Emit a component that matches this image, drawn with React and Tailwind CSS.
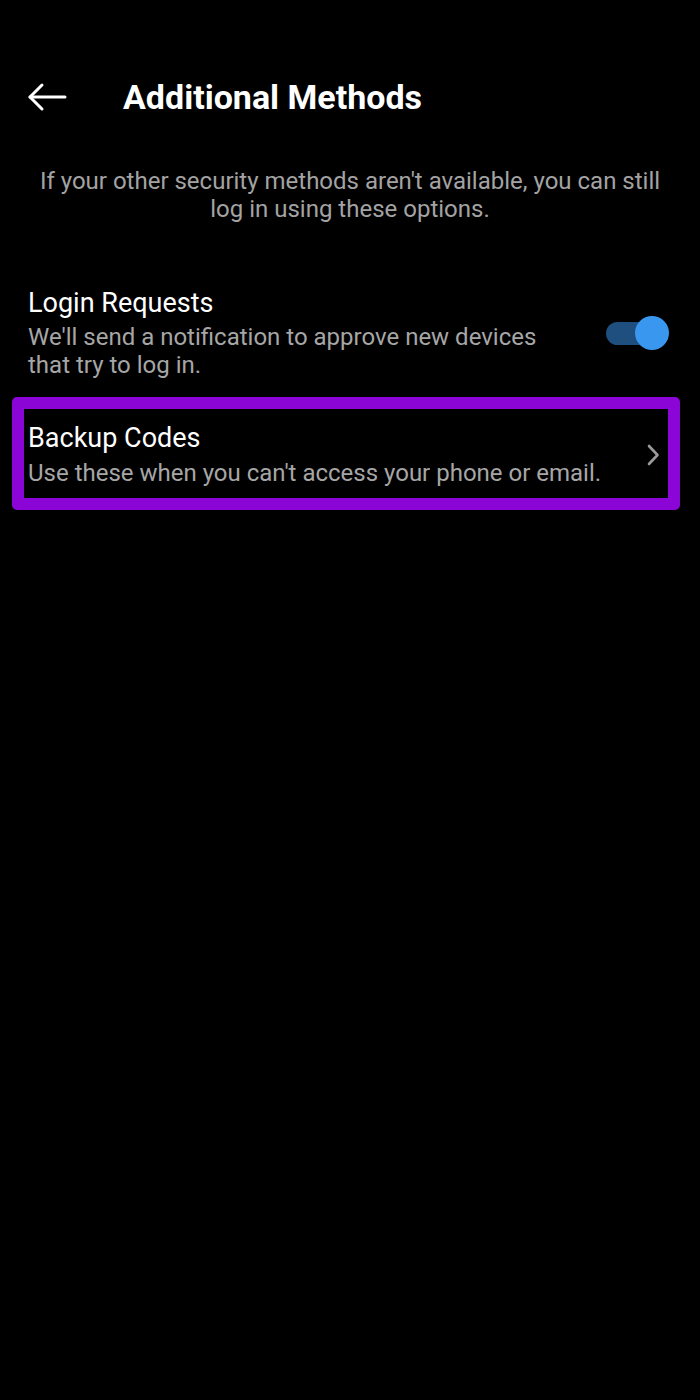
function BackArrow() {
  return (
    <svg width="40" height="30" viewBox="0 0 40 30" fill="none" stroke="white" strokeWidth="3" strokeLinecap="round" strokeLinejoin="round">
      <path d="M38 15H3" />
      <path d="M15 3L3 15l12 12" />
    </svg>
  )
}

function Chevron() {
  return (
    <svg width="14" height="22" viewBox="0 0 14 22" fill="none" stroke="#9a9a9a" strokeWidth="2.6" strokeLinecap="round" strokeLinejoin="round">
      <path d="M3 2l8.5 9L3 20" />
    </svg>
  )
}

function Toggle() {
  return (
    <div className="relative h-[34px] w-[63px] shrink-0">
      <div className="absolute left-0 top-[6px] h-[23px] w-[56px] rounded-full bg-[#1f4f7e]" />
      <div className="absolute right-0 top-0 h-[34px] w-[34px] rounded-full bg-[#3a97ef]" />
    </div>
  )
}

export default function App() {
  return (
    <div className="min-h-[1400px] w-[700px] bg-black font-['Roboto',sans-serif] text-white">
      <div className="box-content flex h-[60px] items-center pt-[67px]">
        <div className="ml-[27px] flex w-[96px] items-center">
          <BackArrow />
        </div>
        <h1 className="text-[34px] font-bold leading-none">Additional Methods</h1>
      </div>

      <p className="mx-auto mt-[40px] w-[630px] text-center text-[24px] leading-[28px] text-[#a3a3a3]">
        If your other security methods aren't available, you can still log in using these options.
      </p>

      <div className="mt-[64px] flex items-center pl-[28px] pr-[31px]">
        <div className="flex-1">
          <div className="text-[27px] leading-[32px]">Login Requests</div>
          <div className="mt-[4px] w-[540px] text-[24px] leading-[28px] text-[#a6a6a6]">
            We'll send a notification to approve new devices that try to log in.
          </div>
        </div>
        <Toggle />
      </div>

      <div className="ml-[12px] mt-[18px] flex w-[668px] items-center rounded-[5px] border-[12px] border-[#8a05d6] pb-[11px] pl-[4px] pr-[8px] pt-[13px]">
        <div className="flex-1">
          <div className="text-[27px] leading-[32px]">Backup Codes</div>
          <div className="mt-[5px] whitespace-nowrap text-[24px] leading-[28px] text-[#a6a6a6]">
            Use these when you can't access your phone or email.
          </div>
        </div>
        <Chevron />
      </div>
    </div>
  )
}
